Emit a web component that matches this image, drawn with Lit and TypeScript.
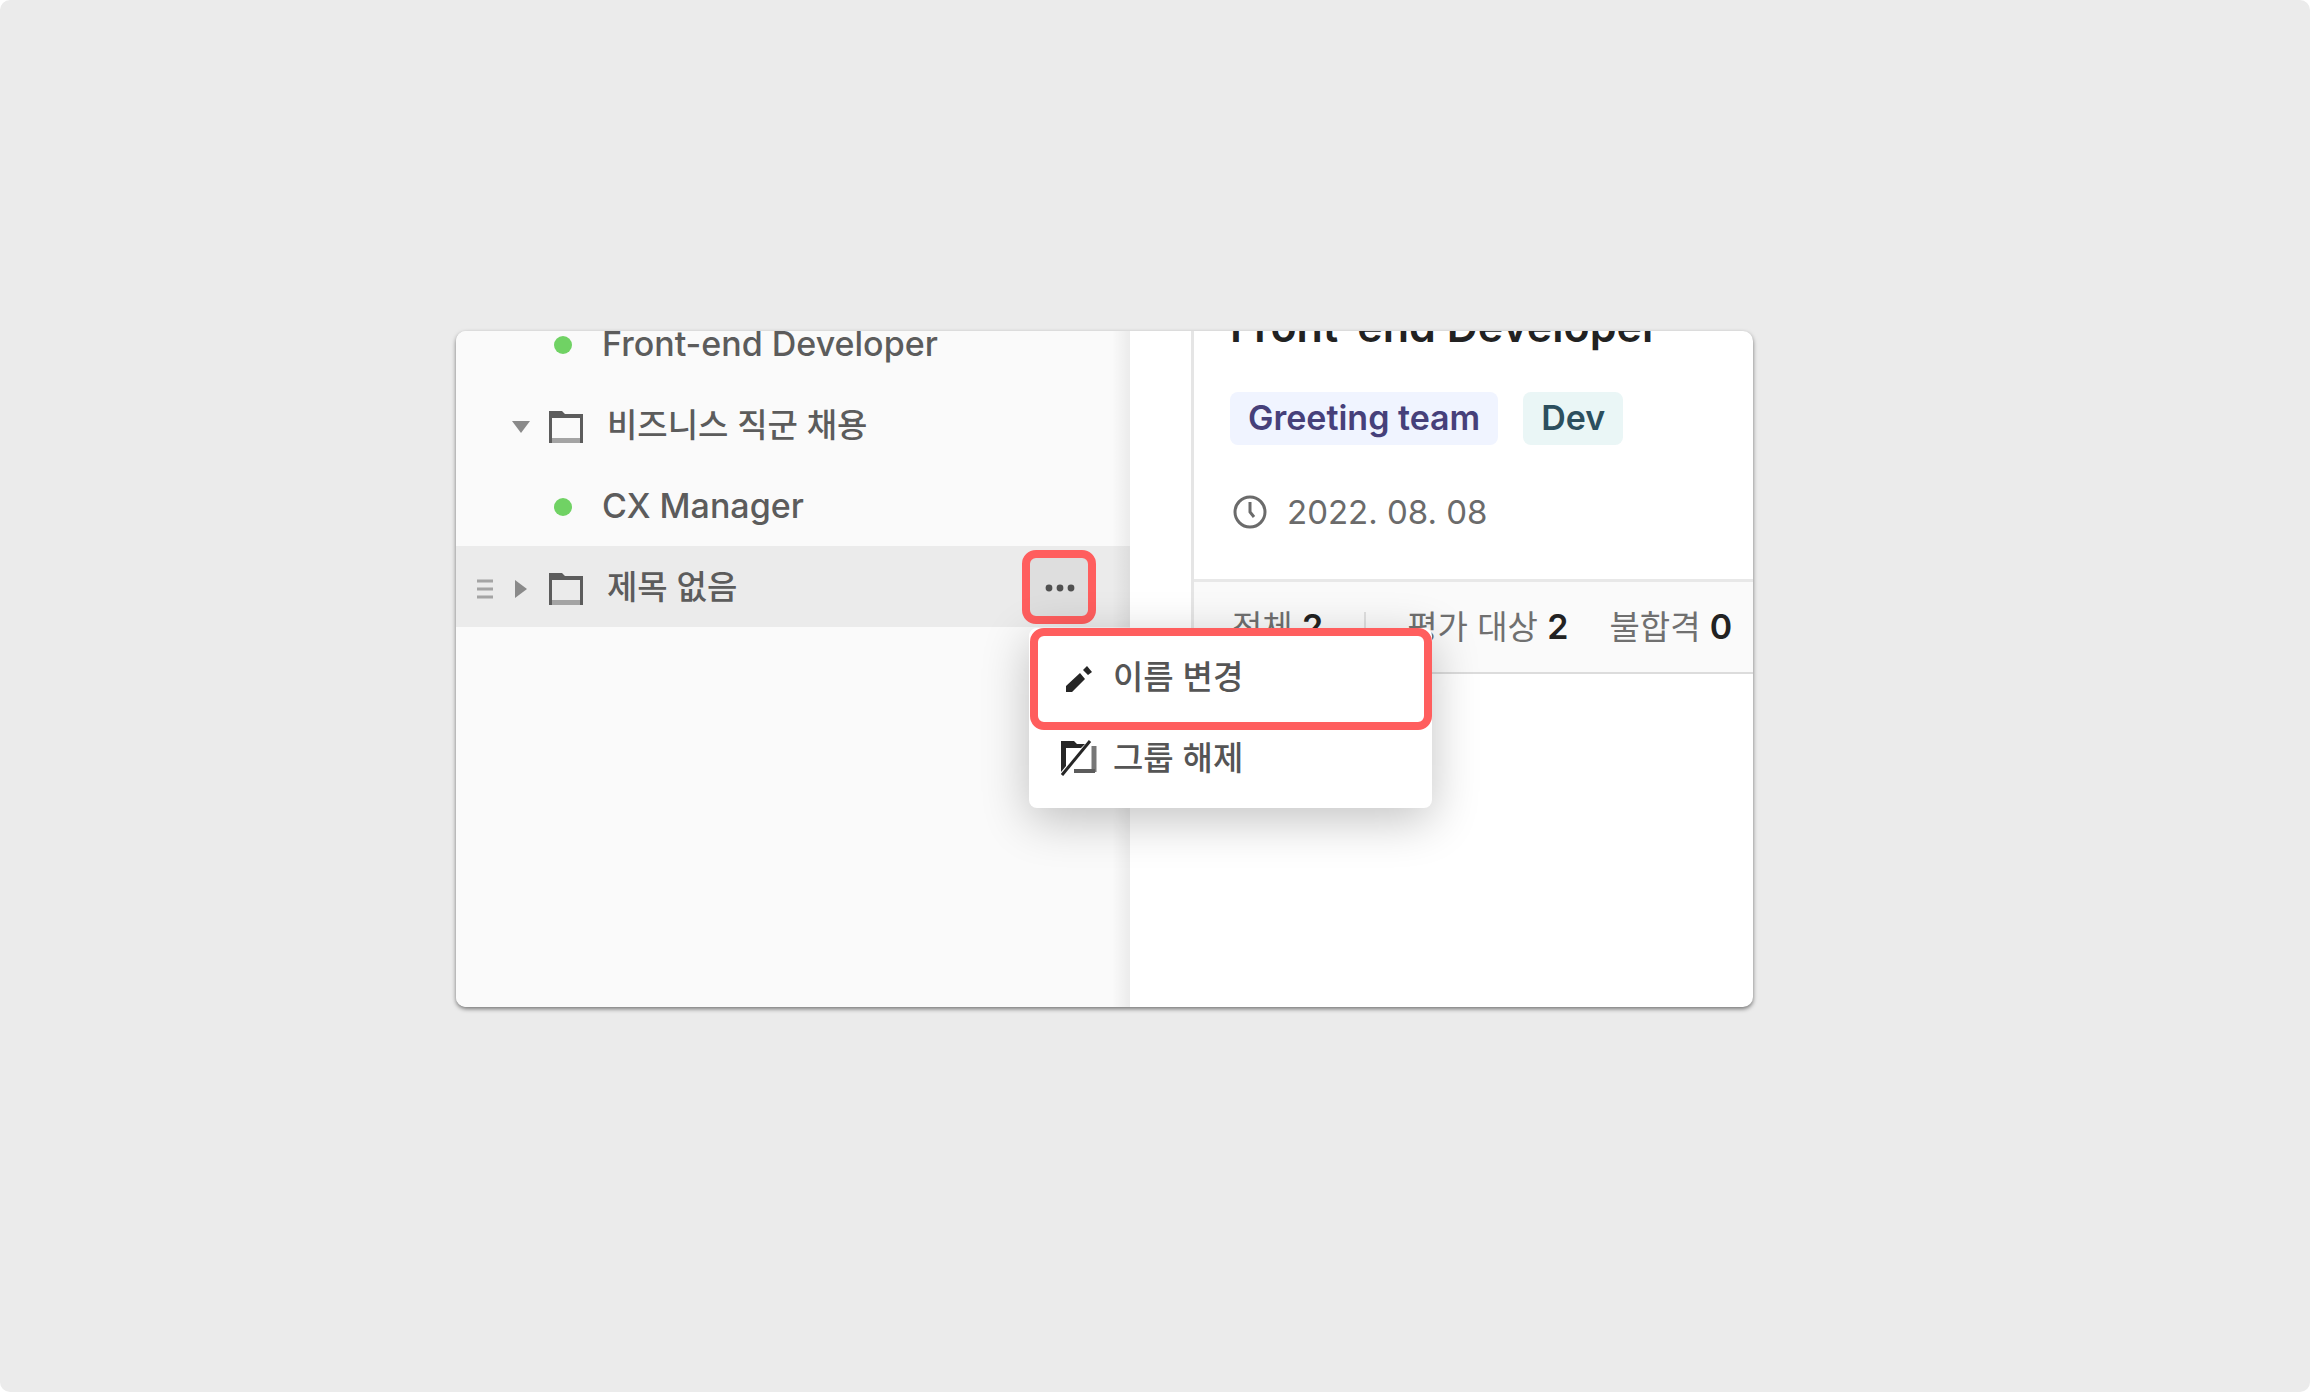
import { LitElement, html, css, svg, nothing } from "lit";
import { customElement, property, state } from "lit/decorators.js";

const folderIcon = svg`
  <svg class="folder" viewBox="0 0 36 34" aria-hidden="true">
    <path fill="currentColor" fill-rule="evenodd" d="M1 1h13l3 3h18v29H1zM4 8v20h28V8z"/>
    <path fill="#a4a4a4" d="M4 28h28v5H4z"/>
  </svg>`;

const pencilIcon = svg`
  <svg class="menu-icon" viewBox="0 0 36 36" aria-hidden="true">
    <path fill="currentColor" d="M5 27v6h6l13-13-5-6zM22 11l5 5 4-3-5-6z"/>
  </svg>`;

const ungroupIcon = svg`
  <svg class="menu-icon" viewBox="0 0 36 36" aria-hidden="true">
    <path fill="currentColor" d="M0 1h13l3 3h8l-4 4H5v18l-5 6z"/>
    <path fill="none" stroke="currentColor" stroke-width="3" d="M1 35 29 1"/>
    <path fill="none" stroke="#777" stroke-width="5" d="M33 6v26"/>
    <path fill="none" stroke="#5c5c5c" stroke-width="4" d="M34 31H13"/>
  </svg>`;

const clockIcon = svg`
  <svg class="clock" viewBox="0 0 34 34" aria-hidden="true">
    <circle cx="17" cy="17" r="15" fill="none" stroke="currentColor" stroke-width="3"/>
    <path d="M17 7v10l4 5" fill="none" stroke="currentColor" stroke-width="3"/>
  </svg>`;

interface TreeItem {
  kind: "job" | "folder";
  label: string;
  open?: boolean;
  active?: boolean;
}

const TREE: TreeItem[] = [
  { kind: "job", label: "Front-end Developer" },
  { kind: "folder", label: "비즈니스 직군 채용", open: true },
  { kind: "job", label: "CX Manager" },
  { kind: "folder", label: "제목 없음", active: true },
];

@customElement("group-menu")
export class GroupMenu extends LitElement {
  static styles = css`
    :host {
      display: block;
      position: relative;
      box-sizing: border-box;
      width: 403px;
      padding: 8px 0 10px;
      border-radius: 8px;
      background: #fff;
      box-shadow: 0 12px 48px rgba(0, 0, 0, 0.24);
    }
    .item {
      display: flex;
      align-items: center;
      gap: 16px;
      width: 100%;
      height: 81px;
      padding: 0 32px;
      border: 0;
      background: none;
      color: #555;
      font: 500 33px/48px Inter, "Noto Sans CJK KR", sans-serif;
      text-align: left;
      cursor: pointer;
    }
    .menu-icon {
      flex: none;
      width: 36px;
      height: 36px;
      color: #262626;
    }
    .marker {
      position: absolute;
      inset: 0 0 auto 1px;
      box-sizing: border-box;
      height: 102px;
      border: 8px solid #ff5e5e;
      border-radius: 14px;
      pointer-events: none;
    }
  `;

  render() {
    return html`
      <button class="item" type="button" role="menuitem">${pencilIcon}<span>이름 변경</span></button>
      <button class="item" type="button" role="menuitem">${ungroupIcon}<span>그룹 해제</span></button>
      <div class="marker"></div>
    `;
  }
}

@customElement("tree-row")
export class TreeRow extends LitElement {
  @property({ attribute: false }) item!: TreeItem;
  @state() private menuOpen = true;

  static styles = css`
    :host {
      display: block;
    }
    .row {
      position: relative;
      display: flex;
      align-items: center;
      height: 81px;
      padding: 0 34px 0 11px;
      color: #5c5c5c;
      font: 500 33px/48px Inter, "Noto Sans CJK KR", sans-serif;
    }
    .active {
      background: #ebebeb;
    }
    .handle,
    .toggle {
      display: flex;
      align-items: center;
      justify-content: center;
      width: 36px;
      height: 36px;
      padding: 0;
      border: 0;
      background: none;
      color: #8a8a8a;
    }
    .handle svg,
    .toggle svg {
      width: 20px;
      height: 20px;
      padding-top: 4px;
    }
    .folder {
      width: 36px;
      height: 34px;
      margin: 4px 23px 0 9px;
      color: #5c5c5c;
    }
    .spacer {
      width: 36px;
    }
    .dot {
      width: 18px;
      height: 18px;
      margin: 2px 30px 0 51px;
      border-radius: 50%;
      background: #70d264;
    }
    .label {
      flex: 1;
      color: inherit;
      text-decoration: none;
      white-space: nowrap;
    }
    .job {
      font-size: 34px;
    }
    .more {
      display: flex;
      align-items: center;
      justify-content: center;
      box-sizing: border-box;
      width: 74px;
      height: 74px;
      padding: 0;
      border: 8px solid #ff5e5e;
      border-radius: 14px;
      background: #dedede;
      color: #505050;
    }
    .more svg {
      width: 30px;
      height: 8px;
      padding: 2px 0 0 2px;
    }
    .popup {
      position: absolute;
      z-index: 3;
      top: 82px;
      right: -302px;
    }
  `;

  render() {
    const { kind, label, open, active } = this.item;
    return html`
      <div class="row ${active ? "active" : ""}">
        ${active
          ? html`<span class="handle">
              <svg viewBox="0 0 20 20" aria-hidden="true">
                <path d="M2 2h16M2 10h16M2 18h16" stroke="#a4a4a4" stroke-width="3" />
              </svg>
            </span>`
          : html`<span class="spacer"></span>`}
        ${kind === "folder"
          ? html`<button class="toggle" type="button" aria-label=${open ? "접기" : "펼치기"}>
                <svg viewBox="0 0 20 20" aria-hidden="true">
                  <path fill="currentColor" d=${open ? "M1 4h18l-9 12z" : "M4 1v18l12-9z"} />
                </svg>
              </button>
              ${folderIcon}<span class="label">${label}</span>`
          : html`<span class="dot"></span><a class="label job" href="#">${label}</a>`}
        ${active
          ? html`<button
                class="more"
                type="button"
                aria-label="더보기"
                @click=${() => (this.menuOpen = !this.menuOpen)}
              >
                <svg viewBox="0 0 30 8" aria-hidden="true">
                  <g fill="currentColor">
                    <circle cx="4" cy="4" r="3.4" /><circle cx="15" cy="4" r="3.4" /><circle cx="26" cy="4" r="3.4" />
                  </g>
                </svg>
              </button>
              ${this.menuOpen ? html`<group-menu class="popup" role="menu"></group-menu>` : nothing}`
          : nothing}
      </div>
    `;
  }
}

@customElement("job-card")
export class JobCard extends LitElement {
  static styles = css`
    :host {
      display: block;
      border-left: 3px solid #e5e5e5;
      border-bottom: 2px solid #dcdcdc;
      font-family: Inter, "Noto Sans CJK KR", sans-serif;
    }
    .body {
      padding: 0 36px 43px;
    }
    .title {
      margin: -33px 0 38px;
      color: #222;
      font-size: 43px;
      line-height: 56px;
      font-weight: 600;
      white-space: nowrap;
    }
    .tags {
      display: flex;
      gap: 25px;
    }
    .tag {
      padding: 0 18px 2px;
      border-radius: 8px;
      font-size: 34px;
      line-height: 51px;
      font-weight: 600;
    }
    .team {
      background: #f0f4ff;
      color: #46407a;
    }
    .dev {
      background: #eaf6f6;
      color: #2c4f5e;
    }
    .date {
      display: flex;
      align-items: center;
      gap: 20px;
      margin-top: 43px;
      padding-left: 3px;
      color: #6b6b6b;
      font-size: 33px;
      line-height: 48px;
    }
    .clock {
      width: 34px;
      height: 34px;
    }
    .stats {
      display: flex;
      align-items: center;
      height: 93px;
      padding-left: 38px;
      border-top: 3px solid #e8e8e8;
      box-sizing: border-box;
      background: #fafafa;
      color: #707070;
      font-size: 33px;
      line-height: 48px;
      white-space: nowrap;
    }
    .stats b {
      color: #222;
      font-size: 34px;
      font-weight: 600;
    }
    .bar {
      width: 2px;
      height: 30px;
      margin: 0 41px;
      background: #e0e0e0;
    }
    .gap {
      margin-left: 41px;
    }
  `;

  render() {
    return html`
      <div class="body">
        <h2 class="title">Front-end Developer</h2>
        <div class="tags">
          <span class="tag team">Greeting team</span>
          <span class="tag dev">Dev</span>
        </div>
        <div class="date">${clockIcon}<time datetime="2022-08-08">2022. 08. 08</time></div>
      </div>
      <div class="stats">
        <span>전체 <b>2</b></span>
        <span class="bar"></span>
        <span>평가 대상 <b>2</b></span>
        <span class="gap">불합격 <b>0</b></span>
      </div>
    `;
  }
}

@customElement("app-root")
export class AppRoot extends LitElement {
  static styles = css`
    :host {
      display: block;
      background: #fff;
    }
    .stage {
      display: grid;
      grid-template-columns: 456fr 1297fr 557fr;
      align-items: start;
      box-sizing: border-box;
      min-height: 100vh;
      padding: 331px 0 48px;
      border-radius: 10px;
      background: #ebebeb;
    }
    .window {
      grid-column: 2;
      display: grid;
      grid-template-columns: 674fr 623fr;
      overflow: hidden;
      border-radius: 10px;
      background: #fff;
      box-shadow: 0 2px 4px rgba(0, 0, 0, 0.5);
    }
    .sidebar {
      position: relative;
      z-index: 1;
      padding-bottom: 380px;
      background: #fafafa;
    }
    .sidebar::after {
      content: "";
      position: absolute;
      inset: 0 0 0 auto;
      width: 18px;
      background: linear-gradient(to right, rgba(0, 0, 0, 0), rgba(0, 0, 0, 0.06));
      pointer-events: none;
    }
    .list {
      margin: -28px 0 0;
      padding: 0;
      list-style: none;
    }
    .content {
      padding-left: 61px;
      min-width: 0;
    }
  `;

  render() {
    return html`
      <div class="stage">
        <main class="window">
          <nav class="sidebar">
            <ul class="list">
              ${TREE.map((item) => html`<li><tree-row .item=${item}></tree-row></li>`)}
            </ul>
          </nav>
          <section class="content"><job-card></job-card></section>
        </main>
      </div>
    `;
  }
}
